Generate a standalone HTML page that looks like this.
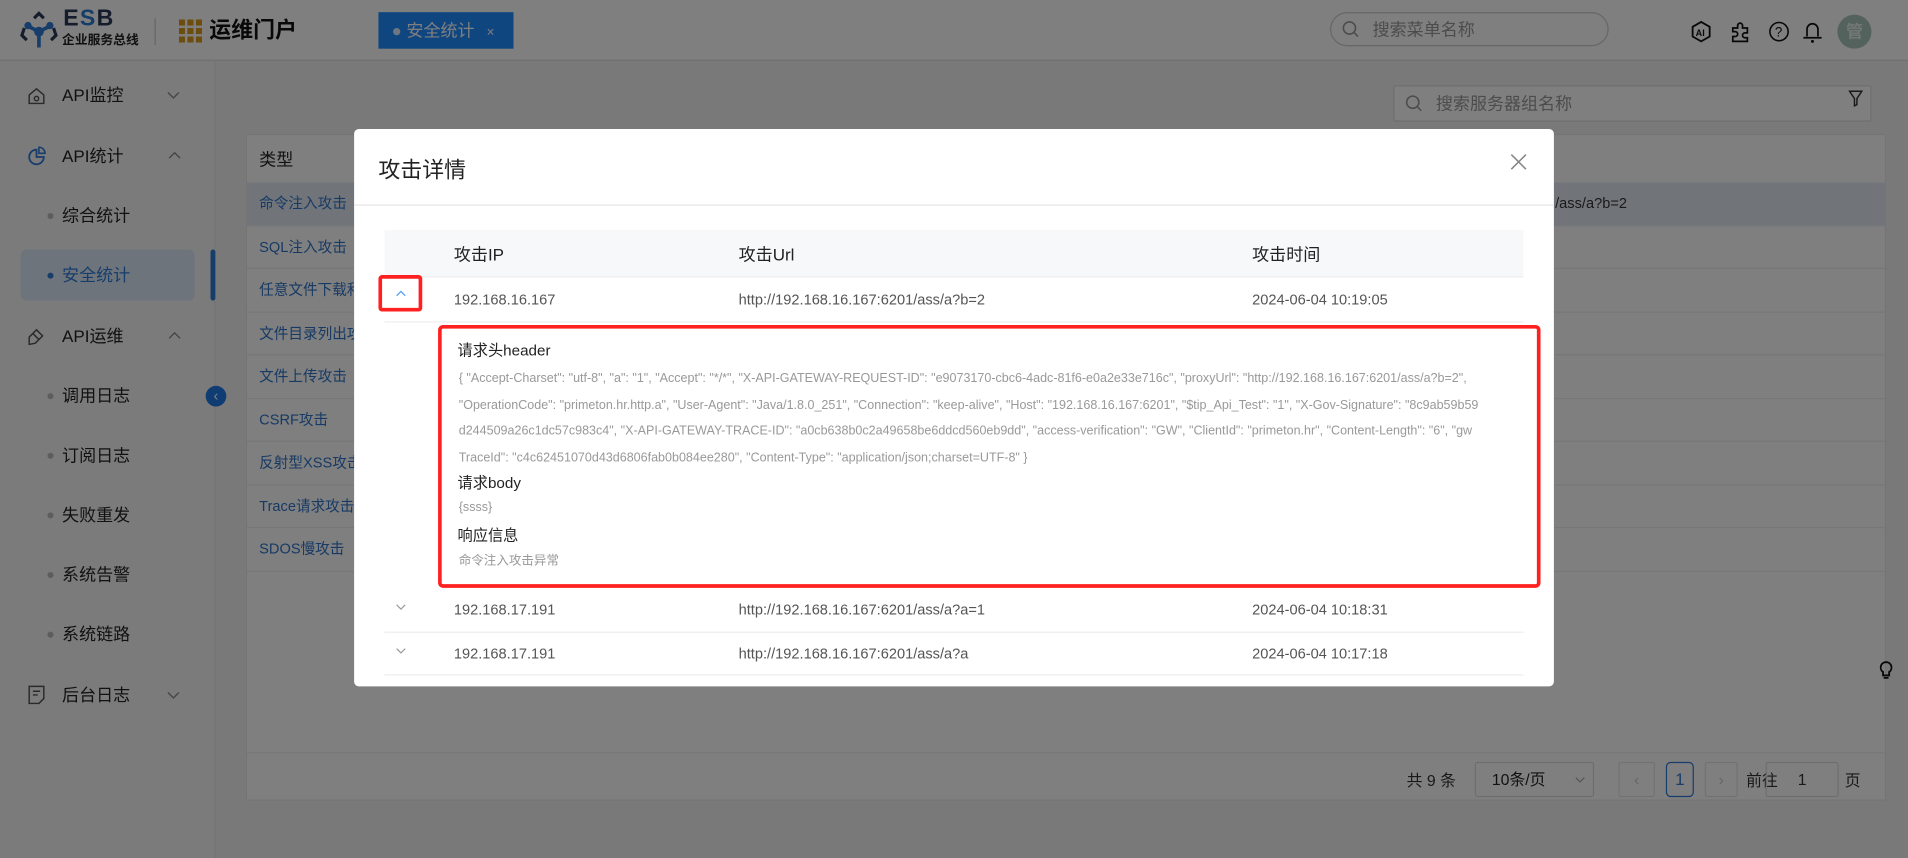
<!DOCTYPE html>
<html><head><meta charset="utf-8">
<style>
*{margin:0;padding:0;box-sizing:border-box}
html,body{width:1908px;height:858px;overflow:hidden;background:#fff}
body{font-family:"Liberation Sans","Noto Sans CJK SC",sans-serif;color:#333}
#app{position:absolute;left:0;top:0;width:1568px;height:705px;transform:scale(1.21684,1.21702);transform-origin:0 0;overflow:hidden;background:#f2f3f5}
.abs{position:absolute}
.hdr{left:0;top:0;width:1568px;height:50px;background:#fff;border-bottom:1px solid #ddd}
.side{left:0;top:50px;width:177px;height:655px;background:#f7f7f8;border-right:1px solid #e6e6e6}
.mi{position:absolute;left:51px;font-size:14px;color:#222;line-height:20px}
.dot{position:absolute;left:39px;width:5px;height:5px;border-radius:50%;background:#bbb}
.tbl{left:202px;top:110px;width:1348px;height:548px;background:#fff;border:1px solid #e8e8e8}
.trow{position:absolute;left:0;width:1346px;height:35.5px;border-bottom:1px solid #eee;font-size:12px;color:#2f74c8;padding-left:10px;line-height:35px}
.mask{left:0;top:0;width:1568px;height:705px;background:rgba(0,0,0,.5)}
.modal{left:291px;top:106px;width:986px;height:458px;background:#fff;border-radius:4px}
.mt{font-size:12px;color:#555;position:absolute;line-height:16px}
.js{position:absolute;left:14px;font-size:10.3px;color:#999;white-space:nowrap;line-height:14px}
.chev{position:absolute}
</style></head><body>
<div id="app">
<div class="abs hdr">
  <svg class="abs" style="left:16px;top:9px" width="32" height="32" viewBox="0 0 32 32"><g fill="none" stroke="#2b3a5a" stroke-width="2.6"><path d="M12 6l4-4 4 4"/><path d="M4 14l-2 6 4 4"/><path d="M28 14l2 6-4 4"/></g><circle cx="16" cy="17" r="4" fill="#2f7ad6"/><circle cx="7" cy="12" r="3" fill="#2f7ad6"/><circle cx="25" cy="12" r="3" fill="#2f7ad6"/><path d="M16 20v10M8 13l8 4 8-4" stroke="#2f7ad6" stroke-width="3" fill="none"/></svg>
  <div class="abs" style="left:52px;top:6px;font-size:19px;font-weight:bold;color:#2b3a5a;letter-spacing:1px;line-height:20px">E<span style="color:#2f7ad6">S</span>B</div>
  <div class="abs" style="left:51px;top:26px;font-size:10.5px;color:#222;font-weight:bold;line-height:14px">企业服务总线</div>
  <div class="abs" style="left:127px;top:15px;width:1px;height:22px;background:#ccc"></div>
  <svg class="abs" style="left:147px;top:16px" width="19" height="19" viewBox="0 0 19 19" fill="#d99a1c"><rect x="0" y="0" width="5" height="5"/><rect x="7" y="0" width="5" height="5"/><rect x="14" y="0" width="5" height="5"/><rect x="0" y="7" width="5" height="5"/><rect x="7" y="7" width="5" height="5"/><rect x="14" y="7" width="5" height="5"/><rect x="0" y="14" width="5" height="5"/><rect x="7" y="14" width="5" height="5"/><rect x="14" y="14" width="5" height="5"/></svg>
  <div class="abs" style="left:172px;top:13px;font-size:18px;font-weight:bold;color:#111;line-height:24px">运维门户</div>
  <div class="abs" style="left:311px;top:10px;width:111px;height:30px;background:#1f8cff;color:#fff;font-size:14px;line-height:30px;padding-left:12px"><span style="display:inline-block;width:6px;height:6px;border-radius:50%;background:#fff;vertical-align:middle;margin-right:5px;opacity:.85"></span>安全统计 <span style="font-size:11px;margin-left:6px">×</span></div>
  <div class="abs" style="left:1093px;top:10px;width:229px;height:28px;border:1px solid #ccc;border-radius:14px;font-size:14px;color:#999;line-height:26px;padding-left:34px">搜索菜单名称</div>
  <svg class="abs" style="left:1103px;top:17px" width="14" height="14" viewBox="0 0 14 14"><circle cx="6" cy="6" r="5" fill="none" stroke="#999" stroke-width="1.3"/><path d="M10 10l3 3" stroke="#999" stroke-width="1.3"/></svg>
  <svg class="abs" style="left:1389px;top:17px" width="18" height="18" viewBox="0 0 18 18"><path d="M9 1l7 4v8l-7 4-7-4V5z" fill="none" stroke="#111" stroke-width="1.5"/><text x="4.5" y="12.5" font-size="7.5" font-weight="bold" font-family="Liberation Sans" fill="#111">AI</text></svg>
  <svg class="abs" style="left:1421px;top:16px" width="20" height="20" viewBox="0 0 20 20"><path d="M3 7h4V5a2 2 0 014 0v2h4v4h-2a2 2 0 000 4h2v3H3v-4h2a2 2 0 000-4H3z" fill="none" stroke="#111" stroke-width="1.4"/></svg>
  <svg class="abs" style="left:1453px;top:17px" width="18" height="18" viewBox="0 0 18 18"><circle cx="9" cy="9" r="7.5" fill="none" stroke="#111" stroke-width="1.3"/><text x="5.6" y="13" font-size="11" font-family="Liberation Sans" fill="#111">?</text></svg>
  <svg class="abs" style="left:1481px;top:16px" width="17" height="20" viewBox="0 0 17 20"><path d="M4 14V8a4.5 4.5 0 019 0v6M1 15h15" fill="none" stroke="#111" stroke-width="1.4"/><circle cx="8.5" cy="18" r="1.2" fill="#111"/></svg>
  <div class="abs" style="left:1510px;top:12px;width:28px;height:28px;border-radius:50%;background:#a8c4bb;color:#e5efe9;font-size:14px;text-align:center;line-height:28px;font-weight:bold">管</div>
</div>
<div class="abs side">
  <svg class="abs" style="left:22px;top:21px" width="16" height="16" viewBox="0 0 16 16"><path d="M2 7l6-5 6 5v7H2z" fill="none" stroke="#555" stroke-width="1.2"/><circle cx="8" cy="10" r="1.8" fill="none" stroke="#555" stroke-width="1.2"/></svg>
  <div class="mi" style="top:18px">API监控</div>
  <svg class="chev" style="left:137px;top:25px" width="11" height="7" viewBox="0 0 11 7"><path d="M1 1l4.5 4.5L10 1" fill="none" stroke="#888" stroke-width="1.1"/></svg>
  <svg class="abs" style="left:23px;top:70px" width="15" height="16" viewBox="0 0 15 16"><path d="M7 3a6 6 0 106 6H7z" fill="none" stroke="#2f7ad6" stroke-width="1.5"/><path d="M9 1a5 5 0 015 5H9z" fill="none" stroke="#2f7ad6" stroke-width="1.3"/></svg>
  <div class="mi" style="top:68px">API统计</div>
  <svg class="chev" style="left:138px;top:74px" width="11" height="7" viewBox="0 0 11 7"><path d="M1 6l4.5-4.5L10 6" fill="none" stroke="#888" stroke-width="1.1"/></svg>
  <div class="dot" style="top:125px"></div><div class="mi" style="top:117px">综合统计</div>
  <div class="abs" style="left:17px;top:155px;width:143px;height:42px;background:#dde8f8;border-radius:5px"></div>
  <div class="dot" style="top:174px;background:#2f7ad6"></div><div class="mi" style="top:166px;color:#2f7ad6">安全统计</div>
  <div class="abs" style="left:173px;top:155px;width:4px;height:42px;background:#2f7ad6;border-radius:2px"></div>
  <svg class="abs" style="left:21px;top:218px" width="17" height="17" viewBox="0 0 17 17"><path d="M3 15V9l6-6 5 5-6 6zM6 6l5 5" fill="none" stroke="#555" stroke-width="1.2"/></svg>
  <div class="mi" style="top:216px">API运维</div>
  <svg class="chev" style="left:138px;top:222px" width="11" height="7" viewBox="0 0 11 7"><path d="M1 6l4.5-4.5L10 6" fill="none" stroke="#888" stroke-width="1.1"/></svg>
  <div class="dot" style="top:273px"></div><div class="mi" style="top:265px">调用日志</div>
  <div class="dot" style="top:322px"></div><div class="mi" style="top:314px">订阅日志</div>
  <div class="dot" style="top:371px"></div><div class="mi" style="top:363px">失败重发</div>
  <div class="dot" style="top:420px"></div><div class="mi" style="top:412px">系统告警</div>
  <div class="dot" style="top:469px"></div><div class="mi" style="top:461px">系统链路</div>
  <svg class="abs" style="left:23px;top:513px" width="14" height="16" viewBox="0 0 14 16"><path d="M1 1h12v10l-4 4H1z M4 5h6M4 8h4" fill="none" stroke="#555" stroke-width="1.2"/></svg>
  <div class="mi" style="top:511px">后台日志</div>
  <svg class="chev" style="left:137px;top:518px" width="11" height="7" viewBox="0 0 11 7"><path d="M1 1l4.5 4.5L10 1" fill="none" stroke="#888" stroke-width="1.1"/></svg>
</div>
<div class="abs" style="left:169px;top:317px;width:17px;height:17px;border-radius:50%;background:#1f7ae6;color:#fff;font-size:12px;text-align:center;line-height:16px">‹</div>
<div class="abs" style="left:1145px;top:70px;width:393px;height:30px;background:#fff;border:1px solid #ddd;border-radius:2px;font-size:14px;color:#999;line-height:28px;padding-left:34px">搜索服务器组名称</div>
<svg class="abs" style="left:1155px;top:78px" width="14" height="14" viewBox="0 0 14 14"><circle cx="6" cy="6" r="5" fill="none" stroke="#999" stroke-width="1.3"/><path d="M10 10l3 3" stroke="#999" stroke-width="1.3"/></svg>
<svg class="abs" style="left:1519px;top:74px" width="12" height="14" viewBox="0 0 12 14"><path d="M1 1h10L7 7v5L5 13V7z" fill="none" stroke="#333" stroke-width="1.2"/></svg>
<div class="abs tbl">
  <div class="abs" style="left:10px;top:10px;font-size:14px;color:#222">类型</div>
  <div class="trow" style="top:39px;background:#e3eaf5">命令注入攻击<span style="position:absolute;left:1075px;color:#333">/ass/a?b=2</span></div>
  <div class="trow" style="top:74.5px">SQL注入攻击</div>
  <div class="trow" style="top:110px">任意文件下载和</div>
  <div class="trow" style="top:145.5px">文件目录列出攻</div>
  <div class="trow" style="top:181px">文件上传攻击</div>
  <div class="trow" style="top:216.5px">CSRF攻击</div>
  <div class="trow" style="top:252px">反射型XSS攻击</div>
  <div class="trow" style="top:287.5px">Trace请求攻击</div>
  <div class="trow" style="top:323px">SDOS慢攻击</div>
  <div class="abs" style="left:0;top:507px;width:1346px;height:1px;background:#eee"></div>
  <div class="abs" style="left:953px;top:520px;font-size:13px;color:#333">共 9 条</div>
  <div class="abs" style="left:1009px;top:515px;width:98px;height:29px;border:1px solid #ddd;border-radius:2px;font-size:13px;line-height:27px;padding-left:13px;color:#222">10条/页</div>
  <svg class="chev" style="left:1091px;top:527px" width="9" height="6" viewBox="0 0 9 6"><path d="M1 1l3.5 3.5L8 1" fill="none" stroke="#aaa" stroke-width="1"/></svg>
  <div class="abs" style="left:1127px;top:515px;width:30px;height:29px;border:1px solid #e4e4e4;border-radius:2px;color:#ccc;text-align:center;line-height:27px;font-size:13px">‹</div>
  <div class="abs" style="left:1166px;top:515px;width:23px;height:29px;border:1px solid #2f7ad6;border-radius:4px;color:#2f7ad6;text-align:center;line-height:27px;font-size:14px">1</div>
  <div class="abs" style="left:1198px;top:515px;width:27px;height:29px;border:1px solid #e4e4e4;border-radius:2px;color:#ccc;text-align:center;line-height:27px;font-size:13px">›</div>
  <div class="abs" style="left:1232px;top:520px;font-size:13px">前往</div>
  <div class="abs" style="left:1248px;top:515px;width:60px;height:29px;border:1px solid #ddd;border-radius:2px;text-align:center;line-height:27px;font-size:13px">1</div>
  <div class="abs" style="left:1313px;top:520px;font-size:13px">页</div>
</div>
<svg class="abs" style="left:1544px;top:543px" width="12" height="16" viewBox="0 0 12 16"><path d="M6 1a4.5 4.5 0 00-2.5 8.2V12h5V9.2A4.5 4.5 0 006 1zM4 14h4" fill="none" stroke="#111" stroke-width="1.5"/></svg>
<div class="abs mask"></div>
<div class="abs modal">
  <div class="abs" style="left:20px;top:22px;font-size:18px;color:#222;line-height:24px">攻击详情</div>
  <svg class="abs" style="left:950px;top:20px" width="14" height="14" viewBox="0 0 14 14"><path d="M1 1l12 12M13 1L1 13" stroke="#888" stroke-width="1.3"/></svg>
  <div class="abs" style="left:0;top:62px;width:986px;height:1px;background:#e6e6e6"></div>
  <div class="abs" style="left:25px;top:83px;width:936px;height:39px;background:#f7f8fa;border-bottom:1px solid #eee"></div>
  <div class="abs" style="left:82px;top:93px;font-size:14px;color:#222">攻击IP</div>
  <div class="abs" style="left:316px;top:93px;font-size:14px;color:#222">攻击Url</div>
  <div class="abs" style="left:738px;top:93px;font-size:14px;color:#222">攻击时间</div>
  <div class="abs" style="left:25px;top:158px;width:936px;height:1px;background:#eee"></div>
  <div class="abs" style="left:20px;top:120px;width:36px;height:30px;border:3px solid #ff2020;border-radius:3px"></div>
  <svg class="chev" style="left:34px;top:132px" width="9" height="6" viewBox="0 0 9 6"><path d="M1 5l3.5-3.5L8 5" fill="none" stroke="#4a9aff" stroke-width="1"/></svg>
  <div class="mt" style="left:82px;top:132px">192.168.16.167</div>
  <div class="mt" style="left:316px;top:132px">http://192.168.16.167:6201/ass/a?b=2</div>
  <div class="mt" style="left:738px;top:132px">2024-06-04 10:19:05</div>
  <div class="abs" style="left:69px;top:161px;width:906px;height:216px;border:3px solid #ff2020;border-radius:4px">
    <div class="abs" style="left:13px;top:7px;font-size:12.5px;color:#222">请求头header</div>
    <div class="js" style="top:35px">{ "Accept-Charset": "utf-8", "a": "1", "Accept": "*/*", "X-API-GATEWAY-REQUEST-ID": "e9073170-cbc6-4adc-81f6-e0a2e33e716c", "proxyUrl": "http://192.168.16.167:6201/ass/a?b=2",</div>
    <div class="js" style="top:57px">"OperationCode": "primeton.hr.http.a", "User-Agent": "Java/1.8.0_251", "Connection": "keep-alive", "Host": "192.168.16.167:6201", "$tip_Api_Test": "1", "X-Gov-Signature": "8c9ab59b59</div>
    <div class="js" style="top:78px">d244509a26c1dc57c983c4", "X-API-GATEWAY-TRACE-ID": "a0cb638b0c2a49658be6ddcd560eb9dd", "access-verification": "GW", "ClientId": "primeton.hr", "Content-Length": "6", "gw</div>
    <div class="js" style="top:100px">TraceId": "c4c62451070d43d6806fab0b084ee280", "Content-Type": "application/json;charset=UTF-8" }</div>
    <div class="abs" style="left:13px;top:116px;font-size:12.5px;color:#222">请求body</div>
    <div class="js" style="top:141px">{ssss}</div>
    <div class="abs" style="left:13px;top:159px;font-size:12.5px;color:#222">响应信息</div>
    <div class="js" style="top:185px">命令注入攻击异常</div>
  </div>
  <svg class="chev" style="left:34px;top:390px" width="9" height="6" viewBox="0 0 9 6"><path d="M1 1l3.5 3.5L8 1" fill="none" stroke="#999" stroke-width="1"/></svg>
  <div class="mt" style="left:82px;top:387px">192.168.17.191</div>
  <div class="mt" style="left:316px;top:387px">http://192.168.16.167:6201/ass/a?a=1</div>
  <div class="mt" style="left:738px;top:387px">2024-06-04 10:18:31</div>
  <div class="abs" style="left:25px;top:413px;width:936px;height:1px;background:#eee"></div>
  <svg class="chev" style="left:34px;top:426px" width="9" height="6" viewBox="0 0 9 6"><path d="M1 1l3.5 3.5L8 1" fill="none" stroke="#999" stroke-width="1"/></svg>
  <div class="mt" style="left:82px;top:423px">192.168.17.191</div>
  <div class="mt" style="left:316px;top:423px">http://192.168.16.167:6201/ass/a?a</div>
  <div class="mt" style="left:738px;top:423px">2024-06-04 10:17:18</div>
  <div class="abs" style="left:25px;top:448px;width:936px;height:1px;background:#eee"></div>
</div>
</div>
</body></html>
